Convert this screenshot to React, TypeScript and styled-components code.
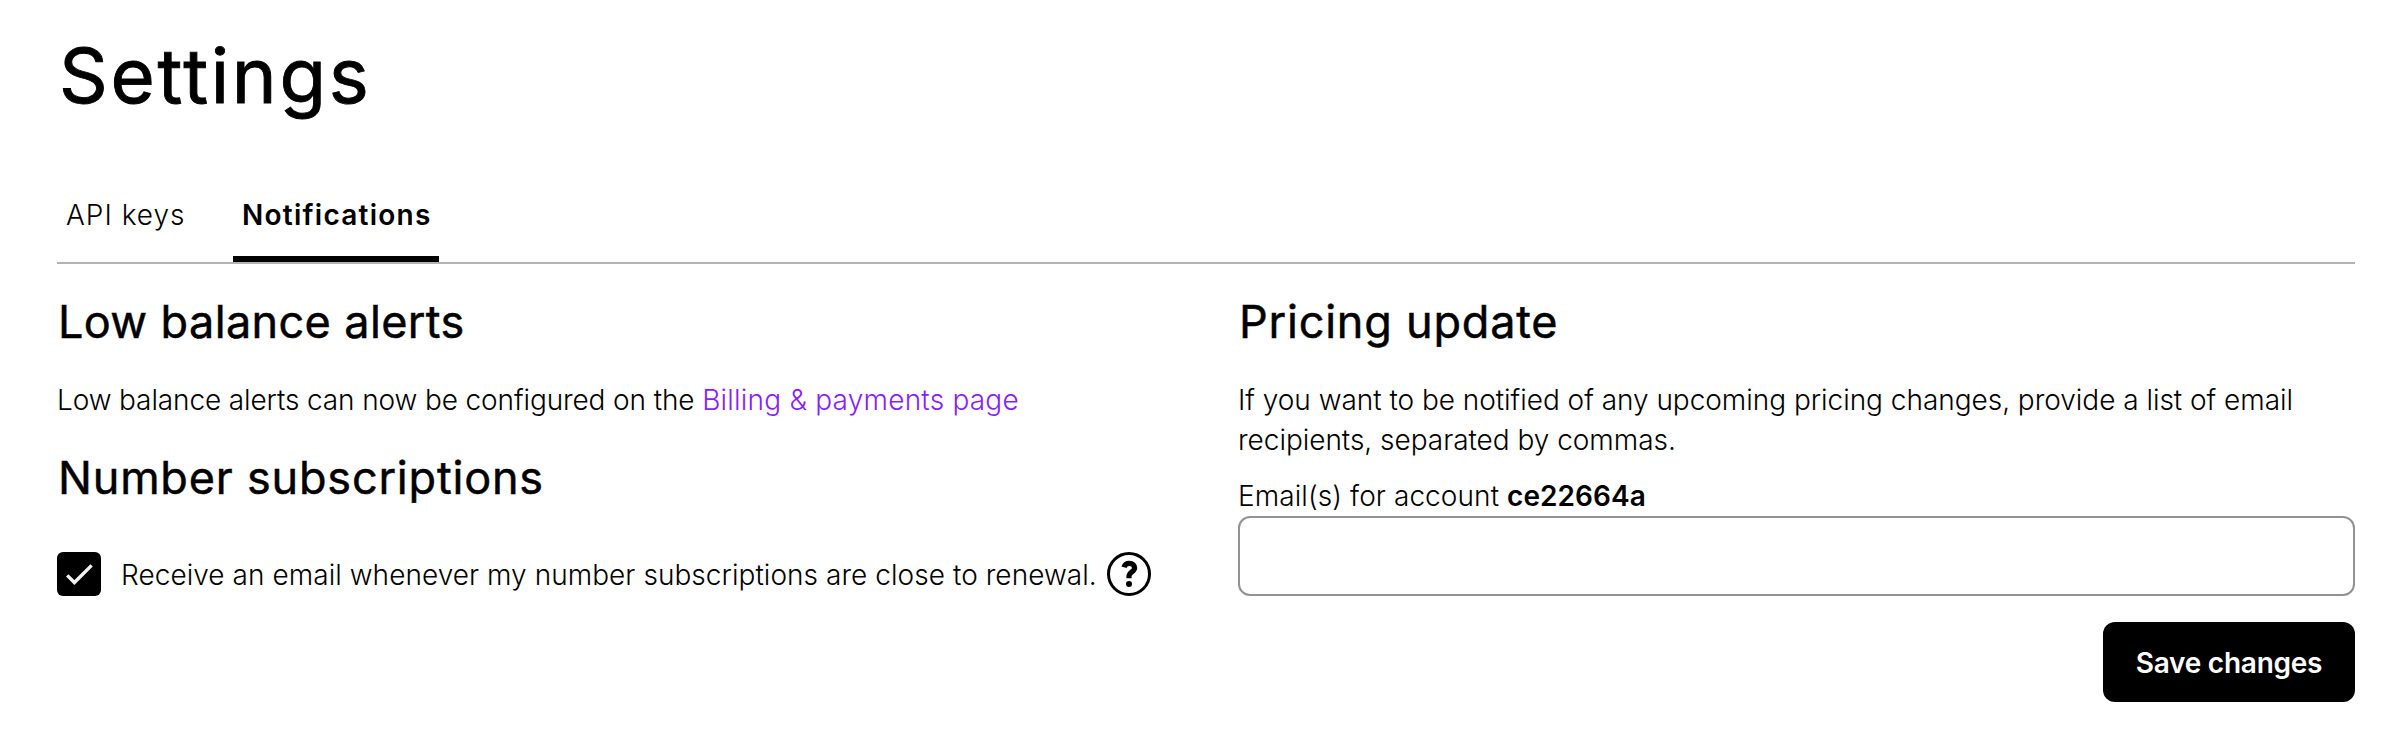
import React, { useState } from "react";
import styled, { createGlobalStyle } from "styled-components";

const GlobalStyle = createGlobalStyle`
  body {
    margin: 0;
    background: #fff;
    color: #000;
    font-family: Inter, "Liberation Sans", sans-serif;
    font-size: 28px;
    font-weight: 300;
    line-height: 40px;
  }
  *, *::before, *::after { box-sizing: border-box; }
`;

const Page = styled.main`
  min-height: 748px;
  padding: 30px 47px 46px 57px;
`;

const Title = styled.h1`
  margin: 0;
  padding-left: 2px;
  font-size: 76px;
  font-weight: 400;
  line-height: 90px;
  letter-spacing: 2.7px;
  -webkit-text-stroke: 0.9px #000;
`;

const TabList = styled.nav`
  display: flex;
  gap: 41px;
  height: 90px;
  margin-top: 54px;
  border-bottom: 2px solid #b3b3b3;
`;

const Tab = styled.button<{ $active?: boolean }>`
  width: ${(p) => (p.$active ? 206 : 135)}px;
  height: 88px;
  padding: 21px 0 21px 9px;
  border: 0;
  border-bottom: 6px solid ${(p) => (p.$active ? "#000" : "transparent")};
  background: none;
  color: inherit;
  font: inherit;
  font-weight: ${(p) => (p.$active ? 600 : 300)};
  letter-spacing: ${(p) => (p.$active ? 1.25 : 1)}px;
  text-align: left;
  white-space: nowrap;
`;

const Columns = styled.div`
  display: grid;
  grid-template-columns: 1fr 1fr;
  gap: 64px;
  margin-top: 28px;
`;

const Column = styled.section`
  min-width: 0;
`;

const Heading = styled.h2<{ $tracking: number; $spaced?: boolean }>`
  margin: ${(p) => (p.$spaced ? 28 : 0)}px 0 0;
  padding-left: 1px;
  font-size: 45px;
  font-weight: 400;
  line-height: 60px;
  letter-spacing: ${(p) => p.$tracking}px;
  -webkit-text-stroke: 0.5px #000;
`;

const Paragraph = styled.p<{ $tracking: number }>`
  margin: 28px 0 0;
  letter-spacing: ${(p) => p.$tracking}px;
`;

const Link = styled.a`
  color: #871eff;
  letter-spacing: 0.22px;
  text-decoration: none;
`;

const OptionRow = styled.div`
  display: flex;
  align-items: center;
  height: 44px;
  margin-top: 44px;
`;

const Checkbox = styled.button`
  width: 44px;
  height: 44px;
  padding: 0;
  border: 0;
  border-radius: 6px;
  background: #000;

  svg { display: block; }
`;

const OptionLabel = styled.span`
  margin-left: 20px;
  padding-top: 2px;
  letter-spacing: 0.05px;
  white-space: nowrap;
`;

const HelpIcon = styled.svg`
  flex: none;
  margin-left: auto;
  margin-right: 23px;
`;

const Label = styled.label`
  display: block;
  margin-top: 16px;
  letter-spacing: 0.08px;

  b { font-weight: 600; }
`;

const Input = styled.input`
  display: block;
  width: 100%;
  height: 80px;
  padding: 0 24px;
  border: 2px solid #929292;
  border-radius: 12px;
  background: #fff;
  font: inherit;
  outline: 0;
`;

const Actions = styled.div`
  display: flex;
  justify-content: flex-end;
  margin-top: 26px;
`;

const SaveButton = styled.button`
  width: 252px;
  height: 80px;
  padding: 1px 0 0;
  border: 0;
  border-radius: 12px;
  background: #000;
  color: #fff;
  font: inherit;
  font-weight: 600;
  letter-spacing: -0.25px;
`;

export default function App() {
  const [checked, setChecked] = useState(true);
  return (
    <Page>
      <GlobalStyle />
      <Title>Settings</Title>
      <TabList>
        <Tab>API keys</Tab>
        <Tab $active>Notifications</Tab>
      </TabList>
      <Columns>
        <Column>
          <Heading $tracking={0.38}>Low balance alerts</Heading>
          <Paragraph $tracking={-0.12}>
            Low balance alerts can now be configured on the <Link>Billing &amp; payments page</Link>
          </Paragraph>
          <Heading $tracking={0.81} $spaced>Number subscriptions</Heading>
          <OptionRow>
            <Checkbox role="checkbox" aria-checked={checked} onClick={() => setChecked(!checked)}>
              {checked && (
                <svg width="44" height="44" viewBox="0 0 44 44" fill="none">
                  <path d="M10.2 23.4 17.4 30.5 34.6 13.4" stroke="#f3f3f3" strokeWidth="3.4" />
                </svg>
              )}
            </Checkbox>
            <OptionLabel>Receive an email whenever my number subscriptions are close to renewal.</OptionLabel>
            <HelpIcon width="44" height="44" viewBox="0 0 44 44" fill="none">
              <circle cx="22" cy="22" r="20.5" stroke="#000" strokeWidth="3" />
              <path
                d="M17 15.2C17.7 12.6 19.6 11.3 22.3 11.3C25.6 11.3 27.6 13.3 27.6 15.9C27.6 19.8 22 19.9 22 24.3V26.2"
                stroke="#000"
                strokeWidth="5.2"
              />
              <circle cx="22" cy="32" r="3" fill="#000" />
            </HelpIcon>
          </OptionRow>
        </Column>
        <Column>
          <Heading $tracking={0.79}>Pricing update</Heading>
          <Paragraph $tracking={-0.03}>
            If you want to be notified of any upcoming pricing changes, provide a list of email
            <br />
            recipients, separated by commas.
          </Paragraph>
          <Label htmlFor="emails">
            Email(s) for account <b>ce22664a</b>
          </Label>
          <Input id="emails" />
          <Actions>
            <SaveButton>Save changes</SaveButton>
          </Actions>
        </Column>
      </Columns>
    </Page>
  );
}
